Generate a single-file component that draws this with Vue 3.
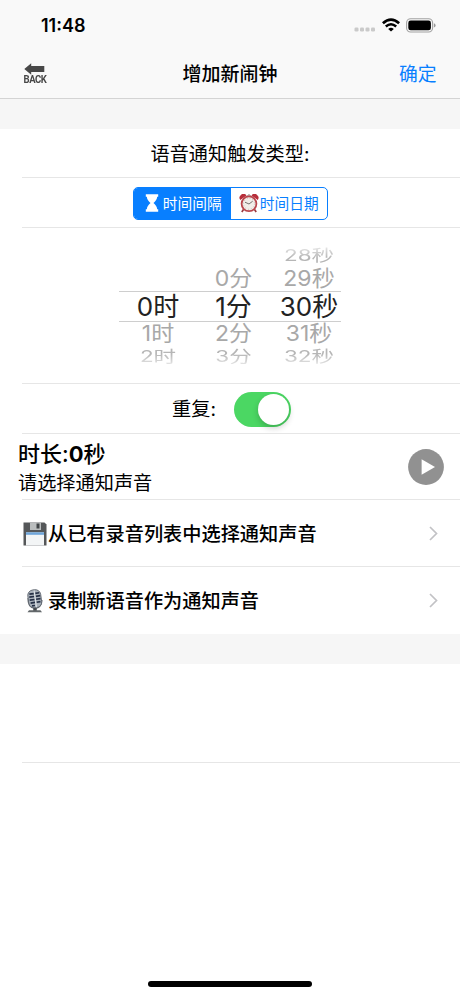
<script setup>
const columns = [
  ['', '', '0时', '1时', '2时'],
  ['', '0分', '1分', '2分', '3分'],
  ['28秒', '29秒', '30秒', '31秒', '32秒'],
]
const depth = ['far top', 'near top', 'current', 'near', 'far']
</script>

<template>
  <div class="screen">
    <header>
      <div class="status">
        <span class="clock">11:48</span>
        <div class="indicators">
          <svg class="dots" width="22" height="5" viewBox="0 0 22 5" fill="#cacaca">
            <rect x="0.5" y="0.5" width="4" height="4" rx="1.3" />
            <rect x="6" y="0.5" width="4" height="4" rx="1.3" />
            <rect x="11.5" y="0.5" width="4" height="4" rx="1.3" />
            <rect x="17" y="0.5" width="4" height="4" rx="1.3" />
          </svg>
          <svg class="wifi" width="18" height="14" viewBox="0 0 18 14" fill="none" stroke="#000">
            <path d="M.9 5.2Q9-2 17.1 5.2" stroke-width="2.7" />
            <path d="M3.8 8.5Q9 4 14.2 8.5" stroke-width="2.5" />
            <path d="M6.2 10.9Q9 8.7 11.8 10.9L9 13.6Z" fill="#000" stroke="none" />
          </svg>
          <svg class="battery" width="30" height="15" viewBox="0 0 30 15">
            <rect x=".6" y=".8" width="26" height="13.2" rx="4" fill="none" stroke="#a2a2a2" stroke-width="1.1" />
            <rect x="2.3" y="2.5" width="22.6" height="9.8" rx="2.4" />
            <path d="M27.9 5.2Q29.6 5.8 29.6 7.4T27.9 9.6Z" fill="#999" />
          </svg>
        </div>
      </div>
      <nav>
        <div class="back">
          <svg width="21" height="12" viewBox="0 0 21 12"><path d="M.3 6 7.2.2V3H20.3V9H7.2V11.8Z" fill="#484848" /></svg>
          <span>BACK</span>
        </div>
        <h1>增加新闹钟</h1>
        <span class="confirm">确定</span>
      </nav>
    </header>

    <main>
      <section class="row type-title">语音通知触发类型:</section>
      <section class="row type-select">
        <div class="segments">
          <div class="segment on">
            <svg width="14" height="18" viewBox="0 0 14 18" fill="#fff">
              <path d="M.8.3h12.4v2.5h-1C12 5.5 10.3 7.5 8.500 9c1.8 1.5 3.5 3.5 3.700 6.200h1v2.500H.8v-2.500h1C2 12.500 3.700 10.500 5.500 9 3.700 7.500 2 5.500 1.800 2.800h-1Z" />
            </svg>
            <span>时间间隔</span>
          </div>
          <div class="segment">
            <svg width="20" height="19" viewBox="0 0 20 19">
              <path d="M4.5 15.5 2.8 18M15.5 15.5 17.2 18" stroke="#9b3d43" stroke-width="1.7" />
              <path d="M1.3 6A3.6 3.6 0 0 1 7.5 1.5ZM18.7 6A3.6 3.6 0 0 0 12.5 1.5Z" fill="#b72f3b" />
              <path d="M8.5 1.5Q10 .1 11.5 1.5" fill="none" stroke="#777" />
              <circle cx="10" cy="9.8" r="7.4" fill="#f2eee9" stroke="#b9464d" stroke-width="1.8" />
              <circle cx="10" cy="9.8" r="5.5" fill="none" stroke="#aaa19d" stroke-width=".8" stroke-dasharray=".7 2.18" />
              <path d="m6 8.2 4 1.8 3.7-2.8" fill="none" stroke="#55504f" stroke-width=".8" />
            </svg>
            <span>时间日期</span>
          </div>
        </div>
      </section>

      <section class="row picker">
        <div class="wheel">
          <div v-for="(column, c) in columns" :key="c" class="column">
            <div v-for="(value, i) in column" :key="i" class="value" :class="depth[i]"><span>{{ value }}</span></div>
          </div>
        </div>
      </section>

      <section class="row repeat">
        <span>重复:</span>
        <div class="switch"><div class="knob"></div></div>
      </section>

      <section class="row sound">
        <div class="sound-text">
          <strong>时长:<b>0</b>秒</strong>
          <span>请选择通知声音</span>
        </div>
        <svg width="36" height="36" viewBox="0 0 36 36"><circle cx="18" cy="18" r="17.9" fill="#919191" /><path d="M13.6 10.3v15.5L27 18Z" fill="#fff" /></svg>
      </section>

      <section class="row link">
        <svg class="icon" width="24" height="24" viewBox="0 0 24 24">
          <path d="M.5.5h21L23.5 2.5V23.5H.5Z" fill="#555759" />
          <path d="M7 .5h11v7.5H7Z" fill="#babdbe" />
          <path d="M13.5 1.5h3v5h-3Z" fill="#414447" />
          <path d="M3 10.3h18V23.5H3Z" fill="#f3f5f6" />
          <path d="M3 10.3h18v2.5H3Z" fill="#6ea5da" />
        </svg>
        <span>从已有录音列表中选择通知声音</span>
        <svg class="chevron" width="9" height="15" viewBox="0 0 9 15"><path d="m1 1 6.5 6.5L1 14" /></svg>
      </section>
      <section class="row link last">
        <svg class="icon" width="24" height="24" viewBox="0 0 24 24">
          <path d="M5 9Q4.5 18.5 12 19.5 18.5 19 19 11" fill="none" stroke="#6b7076" stroke-width="1.2" />
          <path d="M12 18v4" stroke="#44484c" stroke-width="3.5" />
          <path d="M6 21.3h11.5l1.5 2H4.5Z" fill="#62676a" />
          <g transform="rotate(-8 11.5 9.5)">
            <rect x="5.2" y=".8" width="13" height="18" rx="5.5" fill="#a9b1ba" stroke="#555c65" stroke-width=".8" />
            <path d="M7 4.5h4.5M13 4.5h4M6.5 7.5h5M13 7.5h4.5M6.5 10.5h5M13 10.5h4.5M7 13.5h4.5M13 13.5h4M8 16.5h3" stroke="#252f45" stroke-width="1.7" />
            <path d="M12.2 1.5v17" stroke="#e0e4e8" stroke-width="1.1" />
          </g>
        </svg>
        <span>录制新语音作为通知声音</span>
        <svg class="chevron" width="9" height="15" viewBox="0 0 9 15"><path d="m1 1 6.5 6.5L1 14" /></svg>
      </section>
    </main>

    <section class="row empty"></section>
    <footer><div class="home"></div></footer>
  </div>
</template>

<style>
body { margin: 0; background: #fff; }
</style>

<style scoped>
* { box-sizing: border-box; }
.screen {
  width: 460px;
  height: 996px;
  display: flex;
  flex-direction: column;
  overflow: hidden;
  background: #fff;
  color: #000;
  font-family: Inter, "Noto Sans CJK SC", sans-serif;
  font-size: 19.2px;
  line-height: 1;
}
header {
  height: 99px;
  flex: none;
  background: #f9f9f9;
  border-bottom: 1px solid #d4d4d4;
}
.status {
  height: 50px;
  display: flex;
  justify-content: space-between;
  padding: 0 24px 0 41px;
  align-items: center;
}
.clock { font-size: 18px; font-weight: 600; padding-top: 1px; }
.indicators { display: flex; align-items: center; gap: 6px; }
.dots { margin-top: 9px; }
nav {
  height: 48px;
  display: grid;
  grid-template-columns: 1fr auto 1fr;
  align-items: center;
  padding: 0 23.5px;
}
.back { width: 22px; display: flex; flex-direction: column; align-items: center; gap: 0; }
.back span { font: 700 10px/10px Roboto, sans-serif; letter-spacing: -.5px; color: #484848; transform: scaleX(.95); }
h1 { margin: 0; padding-top: 2px; font-size: 19px; font-weight: 500; line-height: 24px; }
.confirm { color: #087fff; justify-self: end; font-size: 18.8px; padding-top: 2px; }
main { flex: none; border-top: 30px solid #f6f6f6; border-bottom: 30px solid #f6f6f6; }
.row { position: relative; display: flex; align-items: center; }
.row:not(.last)::after {
  content: "";
  position: absolute;
  left: 22px;
  right: 0;
  bottom: 0;
  height: 1px;
  background: #e6e6e6;
}
.type-title { height: 49px; justify-content: center; padding-top: 2px; }
.type-select { height: 50px; justify-content: center; }
.segments {
  width: 195px;
  height: 33px;
  display: flex;
  border: 1px solid #087fff;
  border-radius: 5px;
  overflow: hidden;
}
.segment {
  flex: 1;
  display: flex;
  align-items: center;
  justify-content: center;
  gap: 4px;
  color: #087fff;
  font-size: 14.7px;
}
.segment span { padding-top: 2px; }
.segment:not(.on) { gap: 1px; }
.on { background: #087fff; color: #fff; padding-left: 2px; }
.picker { height: 156px; justify-content: center; }
.wheel { width: 222px; display: grid; grid-template-columns: 78px 72px 72px; }
.column { display: grid; grid-template-rows: 22px 24px 31px 24px 22px; }
.column:nth-child(3) .value { padding-left: 8px; }
.value { display: flex; align-items: center; justify-content: center; white-space: nowrap; }
.column:nth-child(2) .value { padding-left: 1px; }
.current { border-top: 1px solid #cecece; border-bottom: 1px solid #cecece; font-size: 26px; color: #222; font-weight: 400; }
.current span { padding-top: 2px; }
.near { font-size: 23px; color: #a8a8a8; font-weight: 400; }
.near span { transform: translateY(1px) scaleY(.92); }
.far { font-size: 22.5px; color: #b6b6b6; font-weight: 400; }
.far span {
  transform: scaleY(.72);
  -webkit-mask-image: linear-gradient(#000 35%, rgba(0, 0, 0, .35));
  mask-image: linear-gradient(#000 35%, rgba(0, 0, 0, .35));
}
.far.top span {
  -webkit-mask-image: linear-gradient(rgba(0, 0, 0, .35), #000 65%);
  mask-image: linear-gradient(rgba(0, 0, 0, .35), #000 65%);
}
.repeat { height: 50px; justify-content: center; gap: 18px; padding-left: 3px; }
.repeat span { padding-top: 2px; }
.switch { width: 57px; height: 35px; border-radius: 18px; background: #4bd763; padding: 2px; display: flex; justify-content: flex-end; }
.knob { width: 31px; height: 31px; border-radius: 50%; background: #fff; box-shadow: 0 3px 6px rgba(0, 0, 0, .2); }
.sound { height: 66px; padding: 0 16px 0 18px; justify-content: space-between; }
.sound-text { display: flex; flex-direction: column; gap: 9px; padding-top: 2px; }
.sound-text strong { font-size: 22px; font-weight: 500; }
.sound-text b { font-weight: 700; }
.link { height: 67px; padding: 0 22px 0 23px; gap: 1px; font-weight: 500; }
.link span { padding-top: 2px; }
.icon { flex: none; }
.chevron { margin-left: auto; fill: none; stroke: #c2c2c5; stroke-width: 1.7; }
.empty { height: 99px; flex: none; }
footer { margin-top: auto; padding-bottom: 9px; display: flex; justify-content: center; }
.home { width: 164px; height: 6px; border-radius: 3px; background: #000; }
</style>
